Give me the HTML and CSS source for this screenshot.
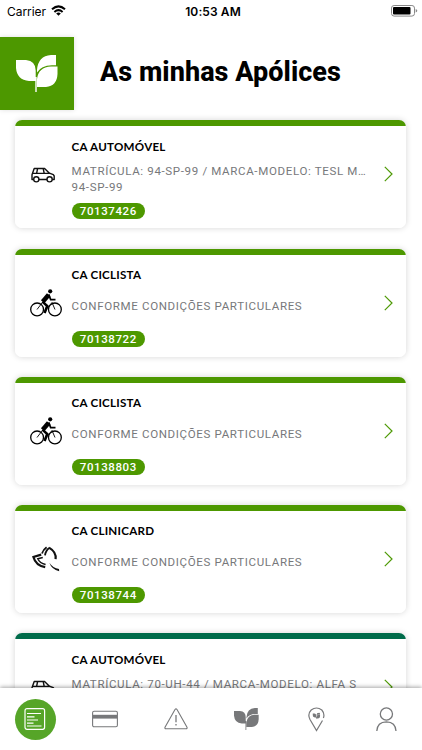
FILE: index.html
```html
<!DOCTYPE html>
<html lang="pt">
<head>
<meta charset="utf-8">
<title>As minhas Apólices</title>
<link rel="stylesheet" href="styles.css">
</head>
<body>
<svg class="defs" width="0" height="0">
  <symbol id="car" viewBox="0 0 24 16"><g fill="none" stroke="#111" stroke-width="1.4" stroke-linejoin="round"><path d="M2.7 12.5H1V7.8L3.2 1.5H13.6L18.4 6.2L22.3 7.7L23.2 9V12.5H21.2M7.8 12.5H16M2 6.4H18.4M6.6 1.5L5.6 6.4M12.2 1.5L13.2 6.4"/><circle cx="5.3" cy="12.3" r="2.6"/><circle cx="18.6" cy="12.3" r="2.6"/></g></symbol>
  <symbol id="bike" viewBox="0 0 32 28"><g fill="none" stroke="#000"><circle cx="7.1" cy="20.4" r="6.4" stroke-width="1.3"/><circle cx="24.9" cy="20.4" r="6.4" stroke-width="1.3"/><path d="M18.7 5.7L12.7 12.8" stroke-width="4.6"/><path d="M18.7 5.4L20.7 10.7H25.5" stroke-width="1.8"/><path d="M12.4 12.6L17.3 17L14.5 24" stroke-width="2.6"/><path d="M7 20.5L12 14M17 19.5L22 13.5L25 20.5" stroke-width=".9"/></g><circle cx="20.2" cy="2.3" r="2.1"/></symbol>
  <symbol id="clinic" viewBox="0 0 28 26"><g fill="none" stroke="#111"><path d="M9.2 8.6L1.4 11Q3.8 19.6 13.2 21.2" stroke-width="2.2"/><path d="M10.8 11.6L5.8 12.8Q7.8 17.4 13.6 18.6" stroke-width="1.5"/><path d="M10 7.4Q11.2 3.6 14.6 1.2" stroke-width="1.8"/><path d="M13 9.4Q13.6 4.6 17.2 2" stroke-width="1.8"/><path d="M17 1.6Q24.6 6 23.6 13.2" stroke-width="2.2"/></g><path d="M17.4 16.8Q20.8 22 27 23L27.2 25.2Q19.5 23.4 17.4 16.8Z" fill="#111"/></symbol>
  <symbol id="leaf" viewBox="0 0 42 38"><path d="M0 5H10Q19.7 6 19.7 15.5V26H13Q1 25 0 13ZM21 15Q22 1 35 0H40V10.2H36Q25 10.5 21 17.5ZM41.5 11.5V19Q41 31 30 32H21V24Q22.5 12 35 11.5ZM19.3 22H20.7V37H19.3Z"/></symbol>
  <symbol id="chev" viewBox="0 0 9 16"><path d="M.8.8L8 8L.8 15.2" fill="none" stroke="#4e9a06" stroke-width="1.2"/></symbol>
</svg>
<div class="screen">
  <div class="status">
    <div class="carrier">Carrier
      <svg width="15" height="11" viewBox="0 0 15 11"><g fill="none" stroke="#000" stroke-width="2"><path d="M1 4.3Q7.5 -1.6 14 4.3"/><path d="M3.4 6.9Q7.5 3.4 11.6 6.9"/></g><path d="M5.2 8.4Q7.5 6.6 9.8 8.4L7.5 10.8Z"/></svg>
    </div>
    <div class="clock">10:53 AM</div>
    <svg class="battery" width="27" height="12" viewBox="0 0 27 12"><rect x=".5" y=".5" width="23" height="10.6" rx="2.6" fill="#fff" stroke="#888"/><rect x="2" y="2" width="17.5" height="7.6" rx="1"/><path d="M24.7 4Q26.3 4.5 26.3 5.8T24.7 7.6Z" fill="#888"/></svg>
  </div>
  <header class="header">
    <div class="logo"><svg width="42" height="38"><use href="#leaf"/></svg></div>
    <h1>As minhas Apólices</h1>
  </header>
  <main class="list">
    <article class="card">
      <div class="icon"><svg class="car" width="24" height="16"><use href="#car"/></svg></div>
      <div class="info"><h2>CA AUTOMÓVEL</h2><div class="desc"><p>MATRÍCULA: 94-SP-99 / MARCA-MODELO: TESL M…</p><p>94-SP-99</p></div><span class="pill">70137426</span></div>
      <svg class="chev" width="9" height="16"><use href="#chev"/></svg>
    </article>
    <article class="card">
      <div class="icon"><svg width="32" height="28"><use href="#bike"/></svg></div>
      <div class="info"><h2>CA CICLISTA</h2><div class="desc one"><p>CONFORME CONDIÇÕES PARTICULARES</p></div><span class="pill">70138722</span></div>
      <svg class="chev" width="9" height="16"><use href="#chev"/></svg>
    </article>
    <article class="card">
      <div class="icon"><svg width="32" height="28"><use href="#bike"/></svg></div>
      <div class="info"><h2>CA CICLISTA</h2><div class="desc one"><p>CONFORME CONDIÇÕES PARTICULARES</p></div><span class="pill">70138803</span></div>
      <svg class="chev" width="9" height="16"><use href="#chev"/></svg>
    </article>
    <article class="card">
      <div class="icon"><svg class="clinic" width="28" height="26"><use href="#clinic"/></svg></div>
      <div class="info"><h2>CA CLINICARD</h2><div class="desc one"><p>CONFORME CONDIÇÕES PARTICULARES</p></div><span class="pill">70138744</span></div>
      <svg class="chev" width="9" height="16"><use href="#chev"/></svg>
    </article>
    <article class="card dark">
      <div class="icon"><svg class="car" width="24" height="16"><use href="#car"/></svg></div>
      <div class="info"><h2>CA AUTOMÓVEL</h2><div class="desc two"><p>MATRÍCULA: 70-UH-44 / MARCA-MODELO: ALFA S</p></div></div>
      <svg class="chev" width="9" height="16"><use href="#chev"/></svg>
    </article>
  </main>
  <nav class="tabs">
    <div class="tab"><span class="active"><svg width="22" height="22" viewBox="0 0 22 22" fill="none" stroke="#fff" stroke-width="1.2"><rect x="1" y=".7" width="19.6" height="20.6" rx="2"/><path d="M3 5.5H17M3 8.8H10.5M3 12H14M3 15.2H9.5M3 18H17.5"/></svg></span></div>
    <div class="tab"><svg width="26" height="18" viewBox="0 0 26 18"><rect x=".6" y="1.2" width="24.8" height="15.6" rx="1.5" fill="none" stroke="#77787a" stroke-width="1.1"/><path d="M1 4.8H25V8.6H1Z" fill="#77787a"/></svg></div>
    <div class="tab"><svg class="warn" width="24" height="22" viewBox="0 0 24 22"><path d="M11 1.5Q12 .3 13 1.5L23 19.3Q23.5 20.7 22 20.8H2Q.5 20.7 1 19.3Z" fill="none" stroke="#77787a" stroke-width="1.1"/><path d="M12 7V14.2M12 16V17.5" stroke="#77787a" stroke-width="1.3"/></svg></div>
    <div class="tab"><svg class="sprout" width="25" height="22.6" viewBox="0 0 42 38"><use href="#leaf" width="42" height="38"/></svg></div>
    <div class="tab"><svg width="17" height="25" viewBox="0 0 17 25"><path d="M14.5 13.5L8.5 23.5L2 12.5Q-.8 7 3.2 3Q8.5 -1 13.8 3Q17 6.7 15.4 11" fill="none" stroke="#77787a" stroke-width="1.2"/><svg x="4.3" y="5.6" width="8.2" height="7" fill="#77787a"><use href="#leaf"/></svg></svg></div>
    <div class="tab"><svg width="21" height="25" viewBox="0 0 21 25" fill="none" stroke="#77787a" stroke-width="1.3"><circle cx="10.4" cy="7" r="6.1"/><path d="M.8 24Q1.2 15 10.4 14.8Q19.6 15 20 24"/></svg></div>
  </nav>
</div>
</body>
</html>
```
FILE: styles.css
```css
* { box-sizing: border-box; }
body { margin: 0; background: #fff; }
h1, h2, p { margin: 0; }
.defs { display: block; height: 0; }
.screen { width: 422px; height: 750px; display: flex; flex-direction: column; overflow: hidden; font-family: Roboto, sans-serif; color: #000; }
.status { height: 37px; padding: 4px 4px 0 7px; display: grid; grid-template-columns: 1fr auto 1fr; align-items: start; font-family: Inter, sans-serif; font-size: 12px; line-height: 15px; }
.carrier { display: flex; gap: 5px; letter-spacing: -.05px; }
.carrier svg { margin-top: 1px; }
.clock { font-weight: 600; letter-spacing: .1px; padding-left: 1px; }
.battery { justify-self: end; margin-top: 1px; }
.header { height: 73px; display: flex; align-items: center; }
.logo { width: 74px; height: 73px; background: #4d9800; display: flex; align-items: center; justify-content: center; fill: #fff; box-shadow: 0 0 5px rgba(0,0,0,.13); }
.header h1 { margin: -3px 0 0 26px; font-size: 27px; line-height: 32px; font-weight: 800; letter-spacing: .05px; white-space: nowrap; }
.list { flex: 1; min-height: 0; overflow: hidden; padding: 10.4px 15.6px 0 15.4px; display: flex; flex-direction: column; gap: 20.25px; }
.card { flex: none; height: 108px; border-radius: 7px; background: linear-gradient(#4d9800 6px, #fff 6px); box-shadow: 0 0 6px rgba(0,0,0,.17); display: flex; align-items: center; padding: 0 13.4px 0 12.2px; }
.card.dark { background: linear-gradient(#006b4a 6px, #fff 6px); }
.icon { width: 44px; flex: none; padding-left: 2px; display: flex; }
.icon .car { margin: 2px 0 0 1px; }
.icon .clinic { margin-left: 2px; }
.info { width: 300px; height: 108px; display: flex; flex-direction: column; padding-top: 18.2px; align-items: flex-start; }
.info h2 { font: 700 11.6px/16px Lato, sans-serif; letter-spacing: .25px; }
.desc { height: 48px; display: flex; flex-direction: column; justify-content: center; font-size: 11.55px; line-height: 16px; letter-spacing: .64px; color: #77787b; white-space: nowrap; }
.desc.one { padding-bottom: 2px; }
.desc.two { justify-content: flex-start; padding-top: 8.5px; }
.pill { width: 73.5px; height: 16px; border-radius: 8px; background: #4d9800; color: #fff; font-size: 11.5px; line-height: 16px; letter-spacing: .6px; text-align: center; font-weight: 500; }
.chev { margin-left: auto; flex: none; }
.tabs { position: relative; height: 62px; flex: none; display: grid; grid-template-columns: repeat(6, 1fr); align-items: center; background: #fff; box-shadow: 0 -1px 4px rgba(0,0,0,.35); }
.tab { display: flex; justify-content: center; }
.active { width: 41px; height: 41px; border-radius: 50%; background: #56a528; display: flex; align-items: center; justify-content: center; }
.sprout { fill: #77787a; }
```
